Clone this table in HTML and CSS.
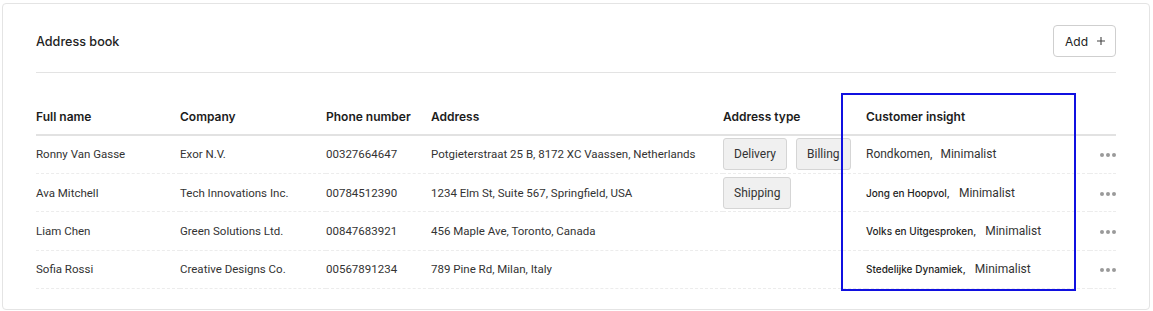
FILE: index.html
```html
<!DOCTYPE html>
<html lang="en">
<head>
<meta charset="utf-8">
<title>Address book</title>
<link rel="stylesheet" href="styles.css">
</head>
<body>
<section class="card">
  <header class="card-head">
    <h1 class="title">Address book</h1>
    <button class="add-btn" type="button">Add
      <svg class="plus" width="10" height="10" viewBox="0 0 10 10" aria-hidden="true"><path d="M5 1v8M1 5h8" stroke="#444" stroke-width="1.1" fill="none"/></svg>
    </button>
  </header>
  <div class="table-wrap">
    <table class="book">
      <colgroup>
        <col class="c-name"><col class="c-company"><col class="c-phone"><col class="c-address"><col class="c-type"><col class="c-insight"><col class="c-act">
      </colgroup>
      <thead>
        <tr>
          <th>Full name</th><th>Company</th><th>Phone number</th><th>Address</th><th>Address type</th><th>Customer insight</th><th></th>
        </tr>
      </thead>
      <tbody>
        <tr>
          <td>Ronny Van Gasse</td><td>Exor N.V.</td><td>00327664647</td><td>Potgieterstraat 25 B, 8172 XC Vaassen, Netherlands</td>
          <td><div class="chips"><span class="chip">Delivery</span><span class="chip">Billing</span></div></td>
          <td><span class="ins-a">Rondkomen,</span><span class="ins-b">Minimalist</span></td>
          <td class="act"><span class="dots"><i></i><i></i><i></i></span></td>
        </tr>
        <tr>
          <td>Ava Mitchell</td><td>Tech Innovations Inc.</td><td>00784512390</td><td>1234 Elm St, Suite 567, Springfield, USA</td>
          <td><div class="chips"><span class="chip">Shipping</span></div></td>
          <td><span class="ins-s">Jong en Hoopvol,</span><span class="ins-b">Minimalist</span></td>
          <td class="act"><span class="dots"><i></i><i></i><i></i></span></td>
        </tr>
        <tr>
          <td>Liam Chen</td><td>Green Solutions Ltd.</td><td>00847683921</td><td>456 Maple Ave, Toronto, Canada</td>
          <td></td>
          <td><span class="ins-s">Volks en Uitgesproken,</span><span class="ins-b">Minimalist</span></td>
          <td class="act"><span class="dots"><i></i><i></i><i></i></span></td>
        </tr>
        <tr>
          <td>Sofia Rossi</td><td>Creative Designs Co.</td><td>00567891234</td><td>789 Pine Rd, Milan, Italy</td>
          <td></td>
          <td><span class="ins-s">Stedelijke Dynamiek,</span><span class="ins-b">Minimalist</span></td>
          <td class="act"><span class="dots"><i></i><i></i><i></i></span></td>
        </tr>
      </tbody>
    </table>
    <div class="highlight" aria-hidden="true"></div>
  </div>
</section>
</body>
</html>
```

FILE: styles.css
```css
* { box-sizing: border-box; }
html, body { background: #ffffff; }
body {
  margin: 0;
  padding: 3px 3px 1px 2px;
  font-family: Roboto, "Liberation Sans", sans-serif;
  color: #333;
}
.card {
  border: 1px solid #e4e4e4;
  border-radius: 4px;
  padding: 21px 33px 21px 33px;
  height: 307px;
}
.card-head {
  display: flex;
  align-items: center;
  justify-content: space-between;
  padding-bottom: 15px;
  border-bottom: 1px solid #e3e3e3;
}
.title {
  margin: 0;
  font-family: Inter, "Liberation Sans", sans-serif;
  font-size: 12.6px;
  font-weight: 500;
  color: #222;
}
.add-btn {
  display: flex;
  align-items: center;
  gap: 8px;
  height: 32px;
  width: 63px;
  padding: 0 0 0 11px;
  background: #fff;
  border: 1px solid #cfcfcf;
  border-radius: 4px;
  font-family: Inter, "Liberation Sans", sans-serif;
  font-size: 12px;
  color: #222;
}
.plus { display: block; }
.table-wrap {
  position: relative;
  margin-top: 25px;
}
.book {
  width: 100%;
  table-layout: fixed;
  border-collapse: collapse;
}
.c-name { width: 144px; }
.c-company { width: 146px; }
.c-phone { width: 105px; }
.c-address { width: 292px; }
.c-type { width: 143px; }
.c-insight { width: 224px; }
.c-act { width: 26px; }
th {
  text-align: left;
  padding: 0;
  height: 37px;
  font-family: Inter, "Liberation Sans", sans-serif;
  font-size: 12px;
  font-weight: 600;
  color: #1c1c1c;
  border-bottom: 2px solid #e2e2e2;
}
td {
  padding: 0;
  height: 38.4px;
  font-size: 11.5px;
  color: #333;
  white-space: nowrap;
  border-bottom: 1px dashed #ececec;
}
.chips { display: flex; gap: 9px; }
.chip {
  display: inline-flex;
  align-items: center;
  height: 32px;
  padding: 0 10px;
  background: #f0f0f0;
  border: 1px solid #d5d5d5;
  border-radius: 3px;
  font-size: 12px;
  color: #333;
}
.ins-a { font-size: 12px; margin-right: 8px; }
.ins-b { font-size: 12px; }
.ins-s {
  font-family: Inter, "Liberation Sans", sans-serif;
  font-size: 10px;
  font-weight: 500;
  color: #1e1e1e;
  margin-right: 9px;
}
.act { text-align: right; }
.dots { display: inline-flex; gap: 2px; vertical-align: middle; }
.dots i {
  display: block;
  width: 4px;
  height: 4px;
  border-radius: 50%;
  background: #9a9a9a;
}
.highlight {
  position: absolute;
  left: 805px;
  top: -5px;
  width: 235px;
  height: 198px;
  border: 2px solid #1010e0;
  pointer-events: none;
}
```
